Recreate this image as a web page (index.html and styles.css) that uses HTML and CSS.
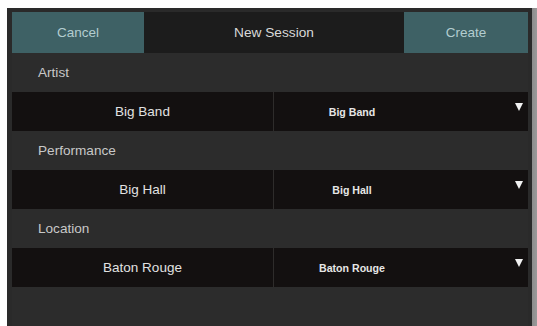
FILE: index.html
```html
<!DOCTYPE html>
<html>
<head>
<meta charset="utf-8">
<link rel="stylesheet" href="styles.css">
</head>
<body>
<div class="frame">
  <div class="panel">
    <div class="header">
      <div class="btn cancel">Cancel</div>
      <div class="title">New Session</div>
      <div class="btn create">Create</div>
    </div>
    <div class="label">Artist</div>
    <div class="select-row">
      <div class="cell-left">Big Band</div>
      <div class="cell-right"><span class="value">Big Band</span><span class="arrow"></span></div>
    </div>
    <div class="label">Performance</div>
    <div class="select-row">
      <div class="cell-left">Big Hall</div>
      <div class="cell-right"><span class="value">Big Hall</span><span class="arrow"></span></div>
    </div>
    <div class="label">Location</div>
    <div class="select-row">
      <div class="cell-left">Baton Rouge</div>
      <div class="cell-right"><span class="value">Baton Rouge</span><span class="arrow"></span></div>
    </div>
    <div class="footer"></div>
  </div>
</div>
</body>
</html>
```
FILE: styles.css
```css
html, body {
  margin: 0;
  padding: 0;
  background: #ffffff;
  width: 537px;
  height: 326px;
  overflow: hidden;
}
body {
  font-family: "Liberation Sans", Arial, sans-serif;
}
.frame {
  margin: 8px 0 0 7px;
  width: 530px;
  height: 330px;
  background: linear-gradient(to right, #2a2a2a 0, #2a2a2a 525px, #8c8c8c 525px, #9a9a9a 530px);
  padding: 4px 0 0 5px;
  box-sizing: border-box;
}
.panel {
  width: 516px;
  height: 330px;
  background: #2c2c2c;
  display: flex;
  flex-direction: column;
}
.header {
  display: flex;
  height: 41px;
  flex: none;
  background: #1c1c1c;
}
.btn {
  display: flex;
  align-items: center;
  justify-content: center;
  background: #3e6165;
  color: #b3cdd0;
  font-size: 13.5px;
}
.cancel { width: 132px; }
.create { width: 124px; }
.title {
  flex: 1;
  display: flex;
  align-items: center;
  justify-content: center;
  color: #d9d9d9;
  font-size: 13.7px;
}
.label {
  height: 39px;
  flex: none;
  display: flex;
  align-items: center;
  padding-left: 26px;
  color: #c8c8c8;
  font-size: 13.6px;
  background: #2c2c2c;
}
.select-row {
  height: 39px;
  flex: none;
  display: flex;
  background: #131010;
}
.cell-left {
  width: 261px;
  display: flex;
  align-items: center;
  justify-content: center;
  color: #e2e2e2;
  font-size: 13.5px;
  border-right: 1px solid #2e2c2b;
}
.cell-right {
  flex: 1;
  position: relative;
  display: flex;
  align-items: center;
}
.value {
  width: 156px;
  text-align: center;
  color: #e6e6e6;
  font-weight: bold;
  font-size: 10.6px;
}
.arrow {
  position: absolute;
  right: 5px;
  top: 11px;
  width: 0;
  height: 0;
  border-left: 4.5px solid transparent;
  border-right: 4.5px solid transparent;
  border-top: 8px solid #f2f2f2;
}
.footer {
  flex: 1;
  background: #2c2c2c;
}
```
